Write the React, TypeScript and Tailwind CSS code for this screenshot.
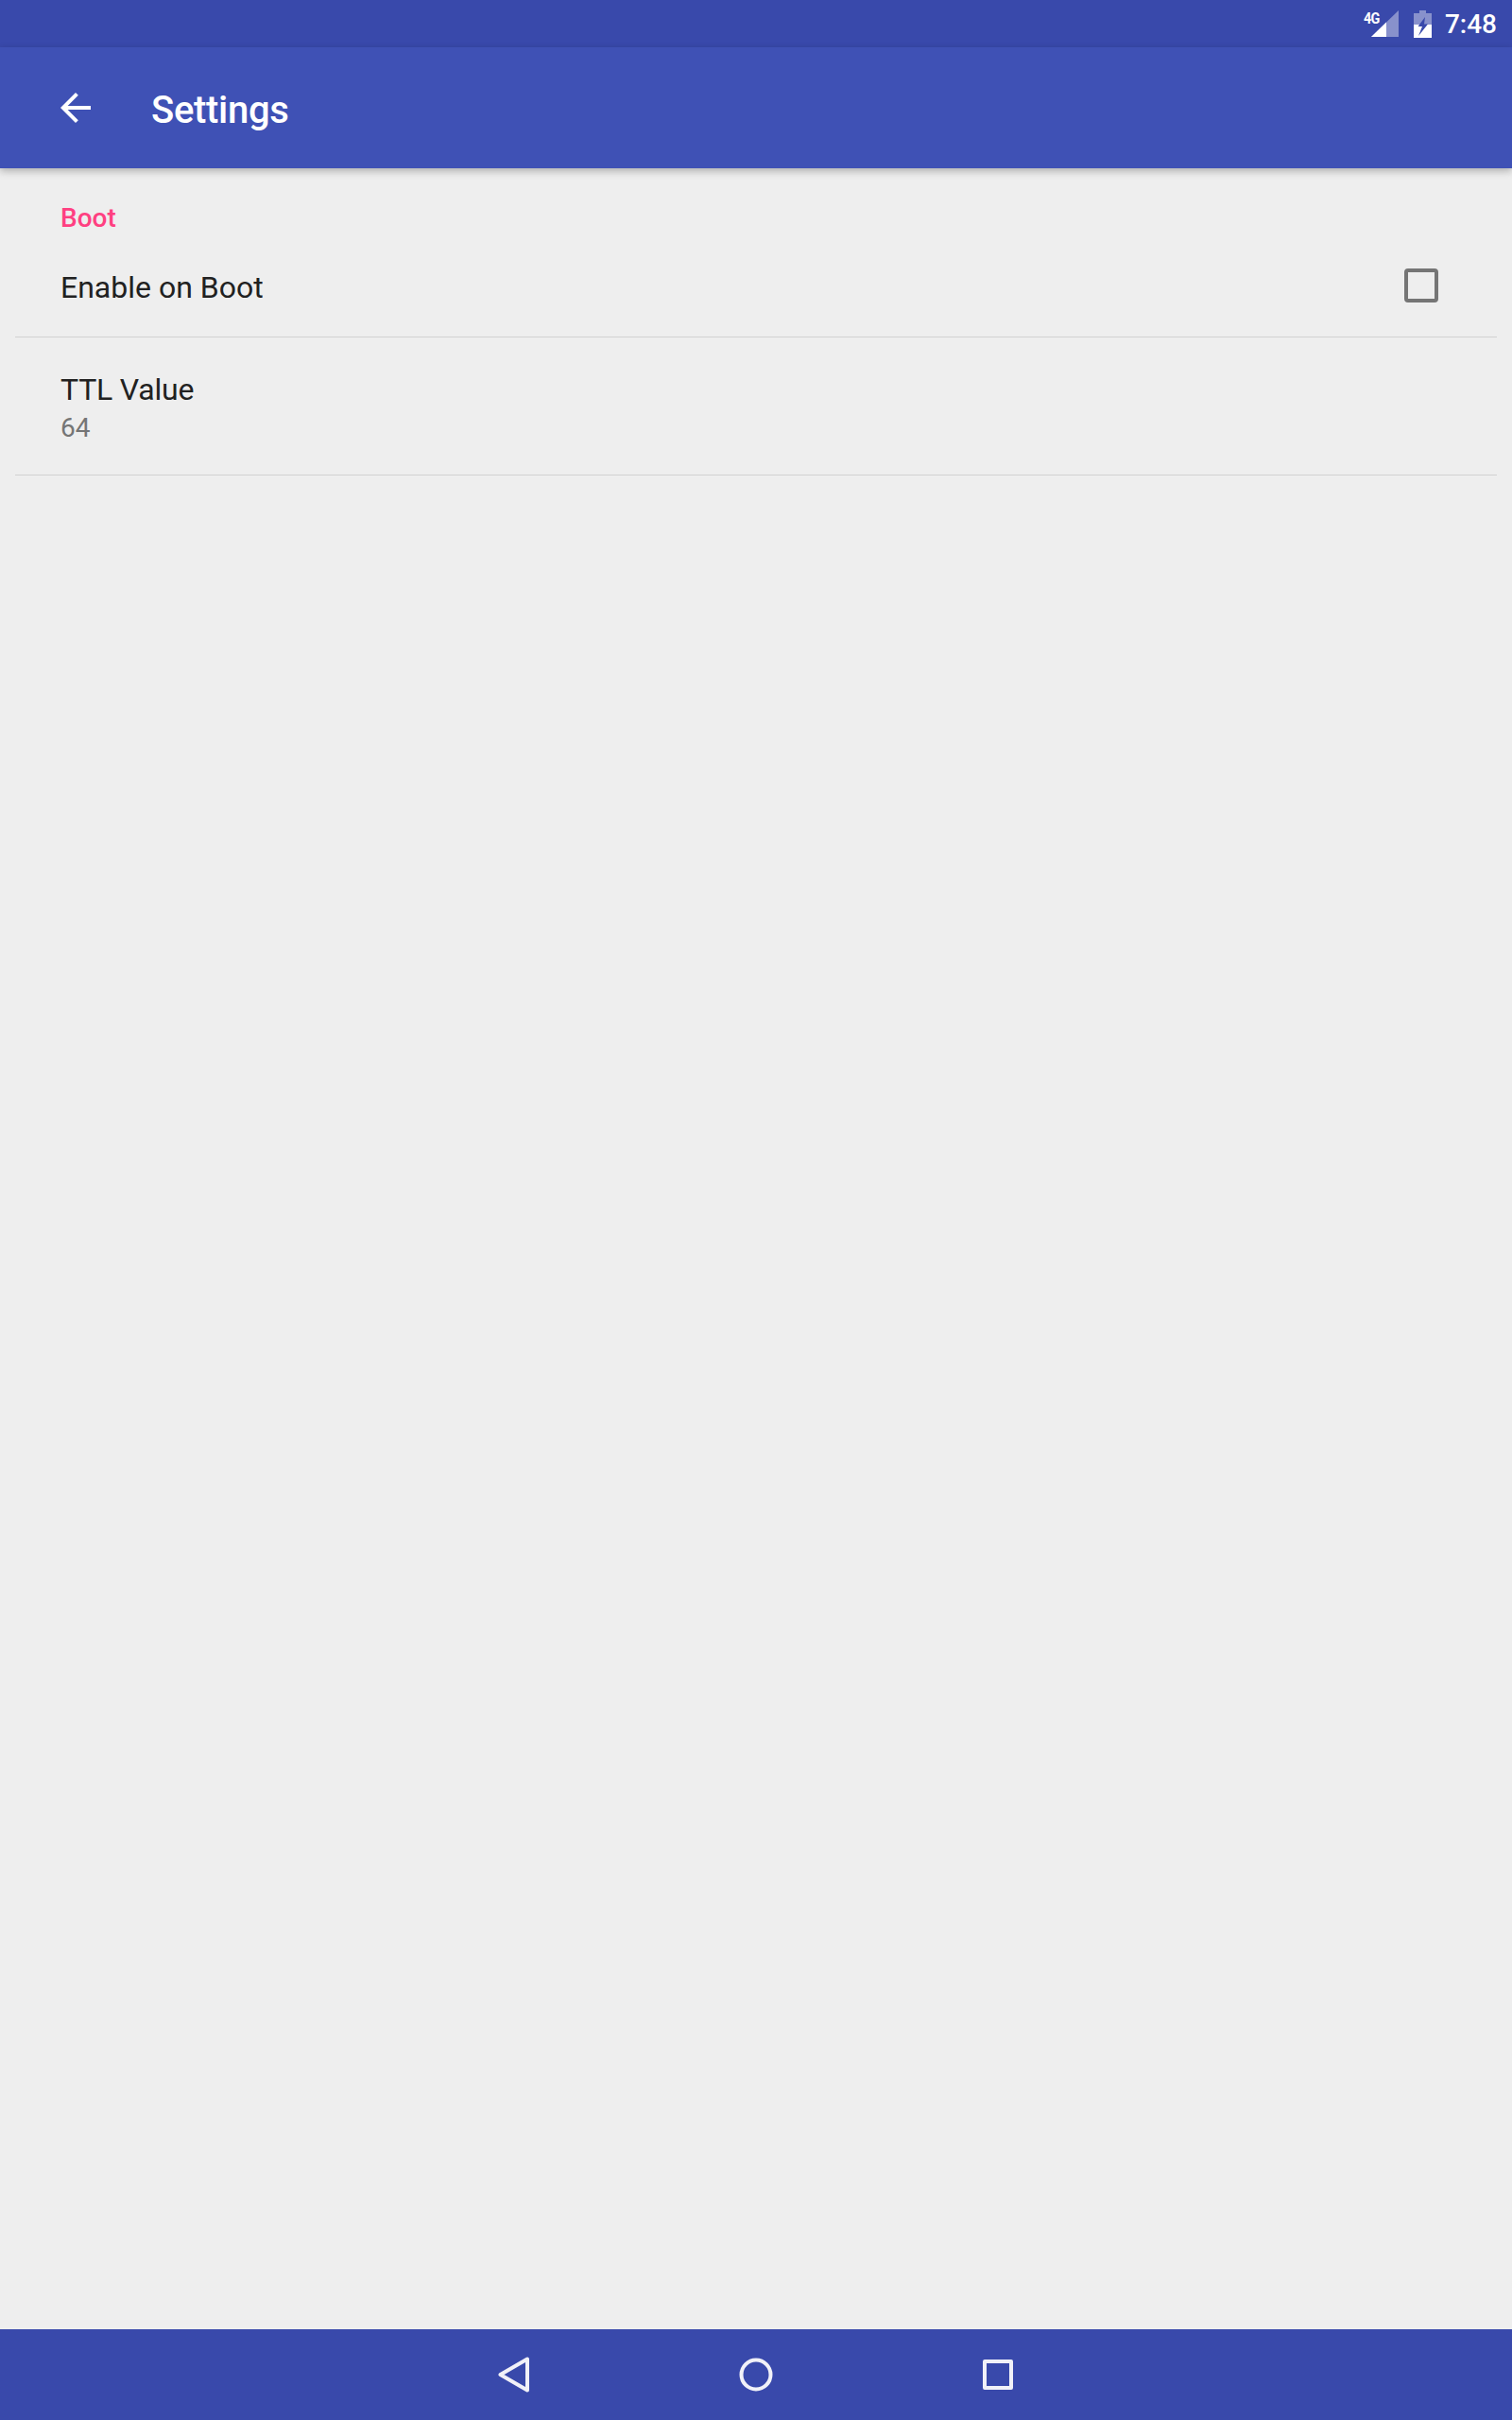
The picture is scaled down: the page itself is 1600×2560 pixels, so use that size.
import React from "react";

function StatusIcons() {
  return (
    <div className="flex items-center">
      {/* signal with the 4G label over it */}
      <div className="relative w-[36px] h-[29px]">
        <svg className="block" width="36" height="29" viewBox="0 0 36 29">
          <polygon points="7,28 36,0 36,28" fill="#ffffff" fillOpacity="0.4" />
          <polygon points="7,28 23,12.5 23,28" fill="#ffffff" />
        </svg>
        <span className="absolute -left-[1px] top-[3px] text-[16px] leading-[12px] font-bold text-white tracking-[-0.8px] scale-x-90 origin-left font-['Roboto',sans-serif]">
          4G
        </span>
      </div>
      <svg className="block ml-[16px]" width="19" height="29" viewBox="0 0 19 29">
        <path d="M6 0h7v3h6v12H0V3h6z" fill="#ffffff" fillOpacity="0.4" />
        <path d="M0 15h19v14H0z" fill="#ffffff" />
        <path d="M12 7 4.5 17H9L5 27l10-12.5h-4z" fill="#3949ab" />
      </svg>
      <span className="ml-[14px] mt-[2px] text-[28px] leading-[36px] font-medium text-white">7:48</span>
    </div>
  );
}

export default function App() {
  return (
    <div className="w-full h-[2560px] flex flex-col bg-[#eeeeee] font-['Roboto',sans-serif]">
      <div className="h-[50px] shrink-0 bg-[#3949ab] flex items-center justify-end pr-[16px]">
        <StatusIcons />
      </div>

      <header className="relative h-[128px] shrink-0 bg-[#3f51b5] flex items-center pl-[56px] shadow-[0_3px_8px_rgba(0,0,0,0.27)]">
        <svg width="48" height="48" viewBox="0 0 24 24" fill="#ffffff">
          <path d="M20 11H7.83l5.59-5.59L12 4l-8 8 8 8 1.41-1.41L7.83 13H20v-2z" />
        </svg>
        <h1 className="ml-[56px] mt-[5px] text-[40px] leading-[48px] font-medium text-white tracking-[-0.3px]">Settings</h1>
      </header>

      <main className="flex-1 px-4 pt-[35px]">
        <div className="pl-12 text-[28px] leading-[36px] font-medium text-[#ff4081]">Boot</div>

        <div className="flex items-start justify-between pl-12 pr-[62px] pt-[35px] pb-[32px] border-b border-[#d1d1d1]">
          <span className="text-[32px] leading-[40px] text-[#212121]">Enable on Boot</span>
          <div className="w-[36px] h-[36px] rounded-[4px] border-[4px] border-[#757575]" />
        </div>

        <div className="pl-12 pt-[35px] pb-[31px] border-b border-[#d1d1d1]">
          <div className="text-[32px] leading-[40px] text-[#212121] tracking-[-0.2px]">TTL Value</div>
          <div className="mt-[3px] text-[28px] leading-[36px] text-[#757575]">64</div>
        </div>
      </main>

      <nav className="h-[96px] shrink-0 bg-[#3949ab] flex items-center justify-center gap-[221px] pr-[1px]">
        <svg width="34" height="38" viewBox="0 0 34 38" fill="none" stroke="#f1f1f8" strokeWidth="4" strokeLinejoin="round">
          <path d="M31 2.5v33L2.5 19z" />
        </svg>
        <svg width="36" height="36" viewBox="0 0 36 36" fill="none" stroke="#f1f1f8" strokeWidth="4">
          <circle cx="18" cy="18" r="15.5" />
        </svg>
        <svg className="ml-[1px]" width="32" height="32" viewBox="0 0 32 32" fill="none" stroke="#f1f1f8" strokeWidth="4" strokeLinejoin="round">
          <rect x="2" y="2" width="28" height="28" />
        </svg>
      </nav>
    </div>
  );
}
